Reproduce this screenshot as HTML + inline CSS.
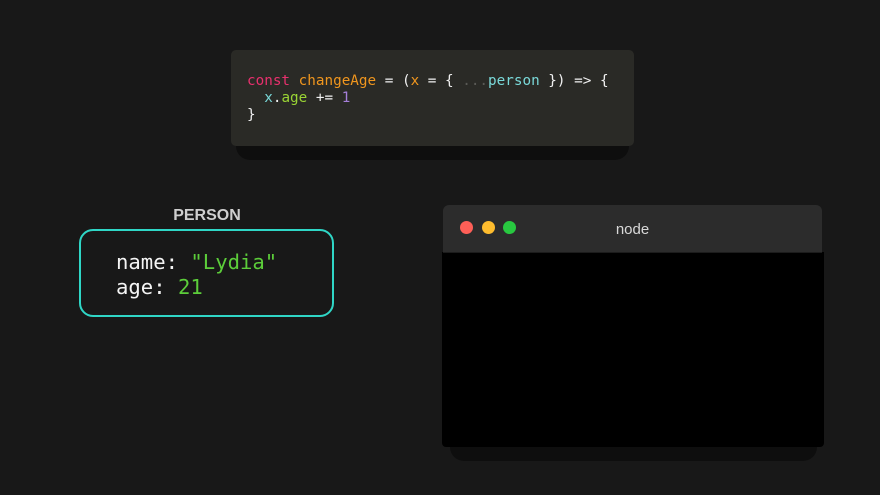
<!DOCTYPE html>
<html><head><meta charset="utf-8"><style>
body{margin:0;width:880px;height:495px;background:#181818;position:relative;overflow:hidden;font-family:"DejaVu Sans Mono","Liberation Mono",monospace}
.abs{position:absolute}
.code{left:231px;top:50px;width:403px;height:96px;background:#2a2a26;border-radius:5px}
.codesh{left:236px;top:120px;width:393px;height:40px;background:#0e0e0e;border-radius:0 0 14px 14px}
pre{margin:0;position:absolute;left:247px;top:73px;font-size:14.3px;line-height:17px;color:#f0f0f0;font-family:"DejaVu Sans Mono",monospace}
.k{color:#e8306d}.o{color:#f0961e}.c{color:#7ad9d9}.g{color:#9ad435}.p{color:#a57fd9}.d{color:#5a5a56}
.lbl{left:107px;width:200px;top:207px;text-align:center;font:bold 16px "Liberation Sans",sans-serif;color:#cfcfcf}
.box{left:79px;top:229px;width:251px;height:84px;border:2.5px solid #2fd6c6;border-radius:14px}
.pt{left:116px;top:250px;font-size:20.6px;line-height:25px;color:#f4f4f4;white-space:pre}
.gr{color:#5ccd3a}
.tsh{left:450px;top:420px;width:367px;height:41px;background:#0e0e0e;border-radius:0 0 14px 14px}
.tbody{left:442px;top:252px;width:382px;height:195px;background:#000;border-radius:0 0 4px 4px}
.tbar{left:443px;top:205px;width:379px;height:48px;background:#2c2c2c;border-radius:6px 6px 0 0;border-bottom:1px solid #1c1c1c;box-sizing:border-box}
.dot{width:13px;height:13px;border-radius:50%;top:221px}
.node{left:443px;width:379px;top:221px;text-align:center;font:15px "Liberation Sans",sans-serif;color:#d8d8d8}
</style></head><body>
<div class="abs codesh"></div>
<div class="abs code"></div>
<pre><span class="k">const</span> <span class="o">changeAge</span> = (<span class="o">x</span> = { <span class="d">...</span><span class="c">person</span> }) =&gt; {
  <span class="c">x</span>.<span class="g">age</span> += <span class="p">1</span>
}</pre>
<div class="abs lbl">PERSON</div>
<div class="abs box"></div>
<div class="abs pt">name: <span class="gr">"Lydia"</span>
age: <span class="gr">21</span></div>
<div class="abs tsh"></div>
<div class="abs tbody"></div>
<div class="abs tbar"></div>
<div class="abs dot" style="left:460px;background:#fe5f57"></div>
<div class="abs dot" style="left:482px;background:#febc2e"></div>
<div class="abs dot" style="left:503px;background:#28c840"></div>
<div class="abs node">node</div>
</body></html>
